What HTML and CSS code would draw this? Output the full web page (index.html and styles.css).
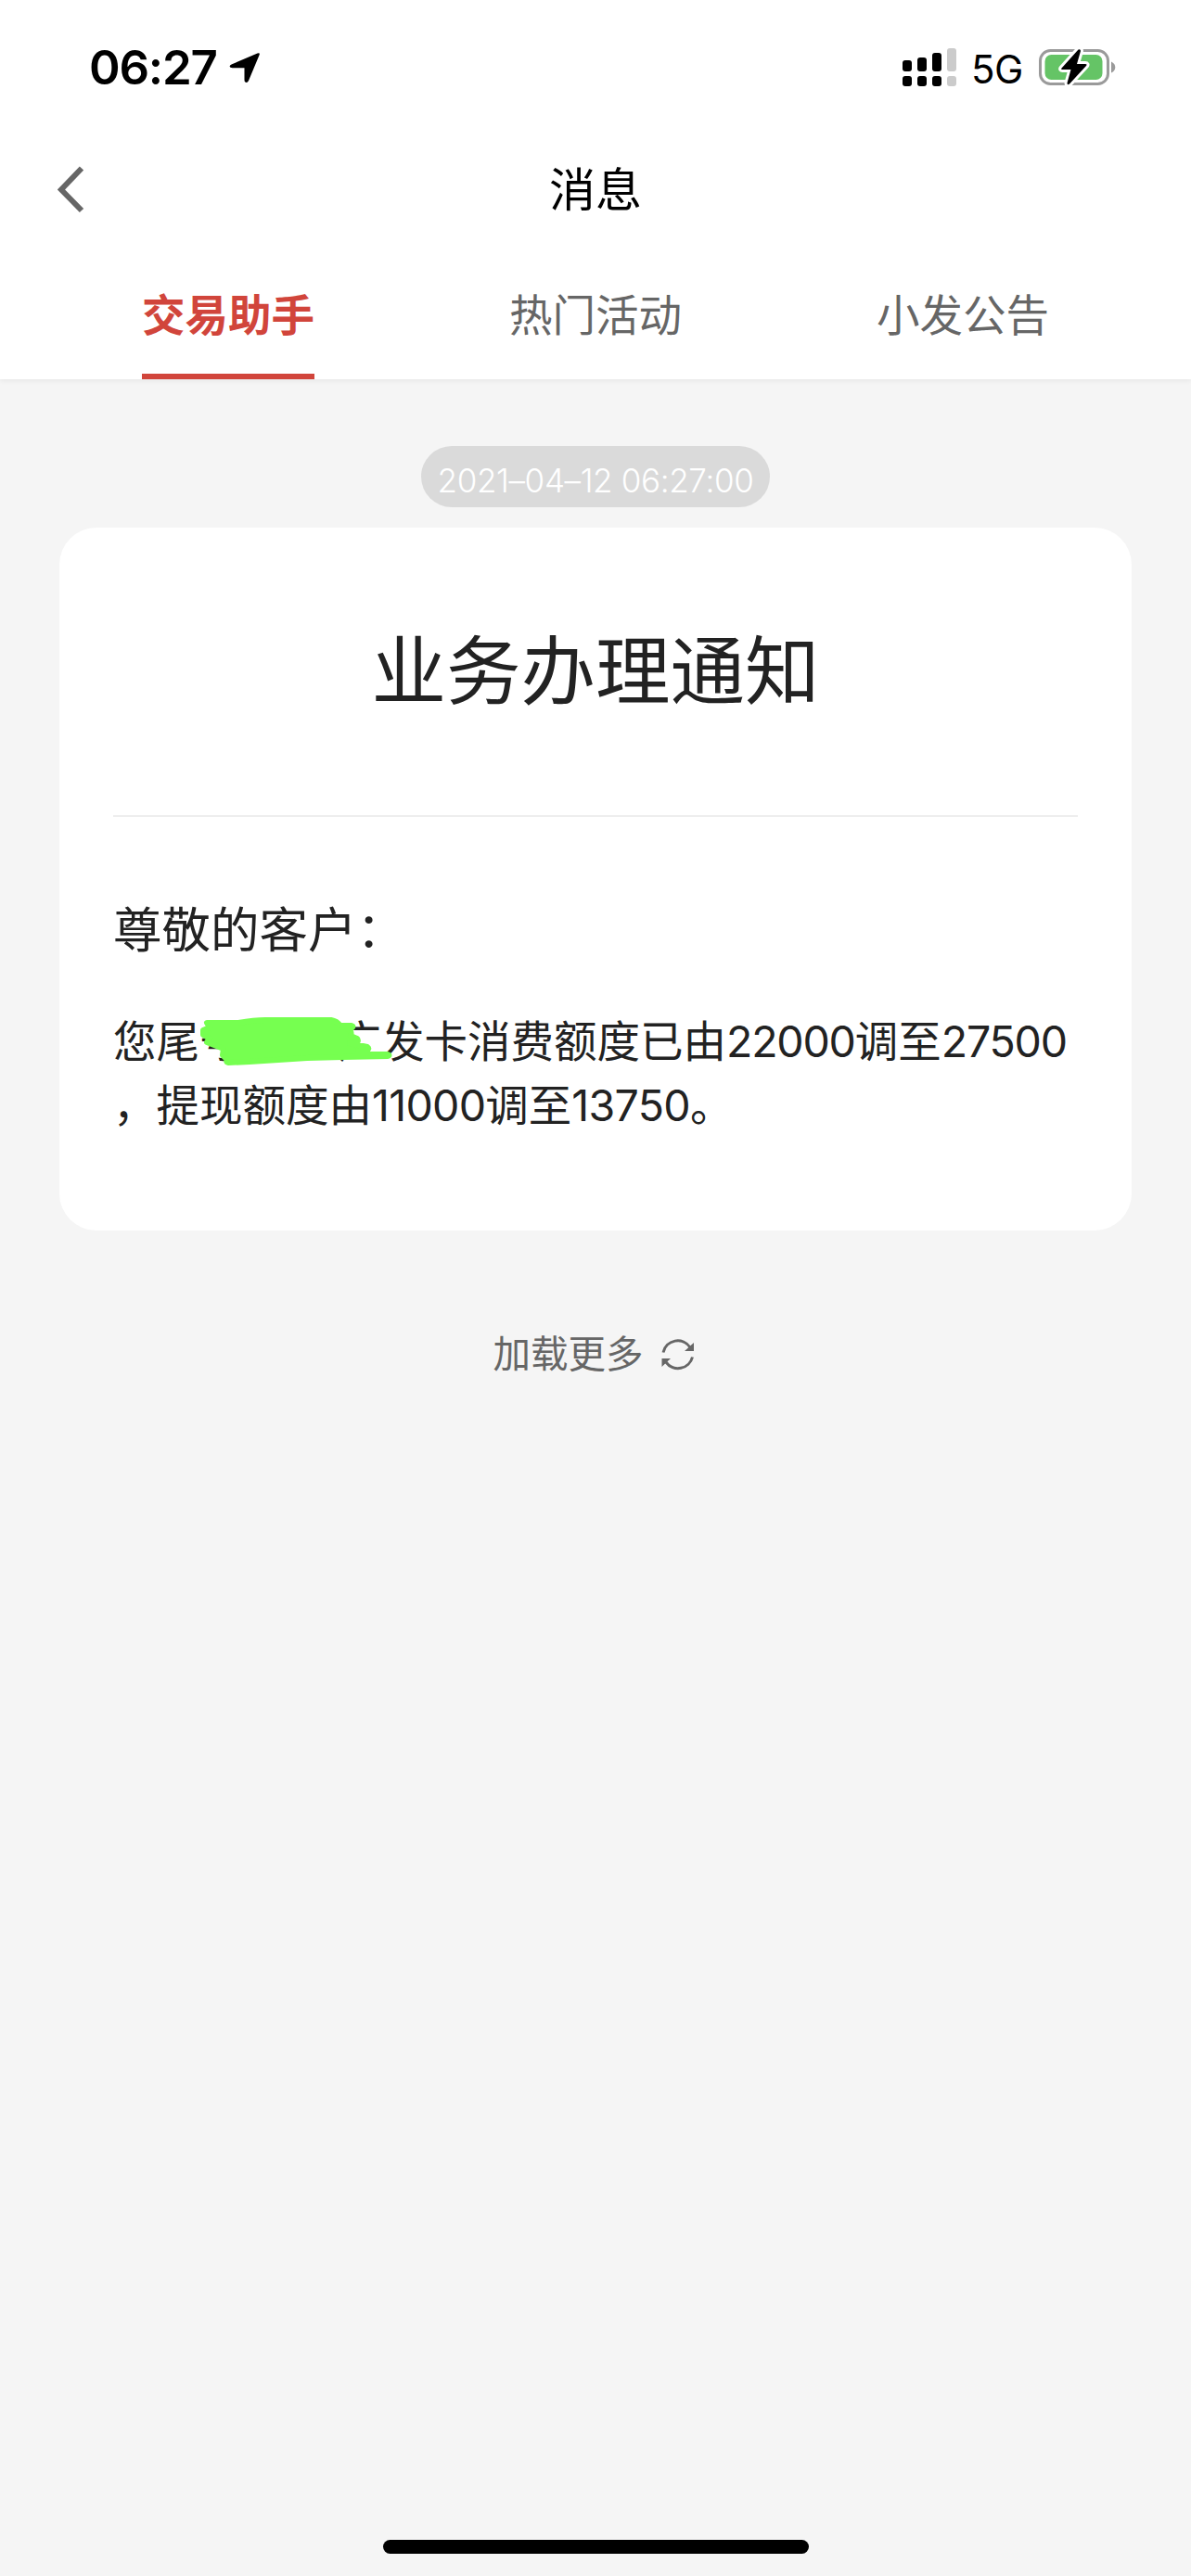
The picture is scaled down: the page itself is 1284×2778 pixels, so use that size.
FILE: index.html
```html
<!DOCTYPE html>
<html lang="zh-CN">
<head>
<meta charset="utf-8">
<title>消息</title>
<link rel="stylesheet" href="styles.css">
</head>
<body>
<div class="screen">
  <header class="header">
    <div class="status">
      <div class="status-left">
        <span class="clock">06:27</span>
        <svg class="location" width="36" height="36" viewBox="0 0 36 36"><path d="M3.5 15.500 31.500 3.500Q34.800 2.400 33.500 5.500L22 33Q20.500 36 18.400 34.600 17.500 34 17.500 32V19.200H4.500Q1.800 19.200 1.600 17.500 1.600 16.300 3.500 15.500Z"/></svg>
      </div>
      <div class="status-right">
        <svg class="signal" width="58" height="42" viewBox="0 0 58 42">
          <rect x="0" y="13" width="10" height="12" rx="3"/><rect x="0" y="30" width="10" height="11" rx="3"/>
          <rect x="16" y="10" width="10" height="15" rx="3"/><rect x="16" y="30" width="10" height="11" rx="3"/>
          <rect x="32" y="5" width="10" height="20" rx="3"/><rect x="32" y="30" width="10" height="11" rx="3"/>
          <g class="off"><rect x="48" y="0" width="10" height="25" rx="3"/><rect x="48" y="30" width="10" height="11" rx="3"/></g>
        </svg>
        <span class="network">5G</span>
        <svg class="battery" width="84" height="42" viewBox="0 0 84 42">
          <rect x="1.500" y="2.500" width="73" height="36" rx="11" fill="none" stroke="#9a9a9a" stroke-width="3"/>
          <path d="M78 14.500Q82.300 16.500 82.300 20.500T78 26.500Z" fill="#9a9a9a"/>
          <rect x="6.500" y="7" width="62" height="27" rx="7" fill="#65c466"/>
          <path d="M42.500 1.500 24.500 21.500Q23.500 23 25.500 23H34.500L30.500 37.500Q30.500 40.500 33 38.500L51 19Q52.500 17 50 17H41L45 3Q45 .5 42.500 1.500Z" fill="#000" stroke="#fff" stroke-width="6" stroke-linejoin="round" paint-order="stroke"/>
        </svg>
      </div>
    </div>
    <div class="navbar">
      <svg class="back" width="32" height="52" viewBox="0 0 32 52"><path d="M28 2.500 6 25.500 28 48" fill="none" stroke="#666" stroke-width="6"/></svg>
      <h1 class="nav-title">消息</h1>
    </div>
    <nav class="tabs">
      <div class="tab"><span class="tab-label active">交易助手</span></div>
      <div class="tab"><span class="tab-label">热门活动</span></div>
      <div class="tab"><span class="tab-label">小发公告</span></div>
    </nav>
  </header>
  <main class="content">
    <time class="stamp">2021–04–12 06:27:00</time>
    <article class="card">
      <h2 class="card-title">业务办理通知</h2>
      <p class="greeting">尊敬的客户：</p>
      <div class="message">
        <p>您尾号<span class="masked"></span>广发卡消费额度已由<span class="num">22000</span>调至<span class="num">27500</span></p>
        <p>，提现额度由<span class="num loose">11000</span>调至<span class="num loose">13750</span>。</p>
        <svg class="scribble" width="212" height="54" viewBox="0 0 212 54"><path d="M9 8H43Q60 5 72 5H143Q149 6 153 11H165Q168 12 165 14H160Q166 17 164 22L171 25Q173 28 170 30H163L182 34Q185 36 181 38H172L173 42H204Q207 43 204 44L155 45 117 46 55 50 32 51Q29 50 31 48L26 43 27 36 9 29 12 25 5 21V16L12 13Z"/></svg>
      </div>
    </article>
    <div class="more">
      <span>加载更多</span>
      <svg class="refresh" width="36" height="36" viewBox="0 0 36 36">
        <path d="M2 15.500A16 16 0 0 1 31 10M33.500 20.500A16 16 0 0 1 5 26" fill="none" stroke="#666" stroke-width="3"/>
        <path d="M35 5V14H25ZM.5 31V22H10Z" fill="#666"/>
      </svg>
    </div>
  </main>
  <div class="home-indicator"></div>
</div>
</body>
</html>
```
FILE: styles.css
```css
* { box-sizing: border-box; margin: 0; padding: 0; }

body {
  background: #f5f5f5;
  color: #222;
  font-family: Inter, "Noto Sans CJK SC", sans-serif;
}

svg { display: block; flex: none; }

.screen {
  display: flex;
  flex-direction: column;
  width: 1284px;
  height: 2778px;
}

.header {
  height: 409px;
  background: #fff;
  box-shadow: 0 2px 5px rgba(0, 0, 0, .06);
}

.status {
  display: flex;
  justify-content: space-between;
  height: 141px;
  padding: 52px 80px 0 96px;
  color: #000;
}

.status-left, .status-right { display: flex; height: 42px; }

.clock {
  width: 150px;
  font-size: 51px;
  font-weight: 600;
  line-height: 42px;
  letter-spacing: -1.2px;
  white-space: nowrap;
}

.location { margin-top: 2px; }
.signal { fill: #000; }
.signal .off { fill: #cbcbcb; }

.network {
  width: 89px;
  padding-left: 16px;
  font-size: 42px;
  font-weight: 400;
  line-height: 45px;
  letter-spacing: -.5px;
}

.navbar {
  display: grid;
  grid-template-columns: 120px 1fr 120px;
  align-items: center;
  height: 127px;
  padding: 0 60px;
}

.nav-title {
  color: #000;
  font-size: 50px;
  font-weight: 400;
  line-height: 72px;
  text-align: center;
}

.tabs {
  display: grid;
  grid-template-columns: repeat(3, 1fr);
  height: 141px;
  padding: 0 48px;
}

.tab { display: flex; justify-content: center; }

.tab-label {
  height: 141px;
  color: #666;
  font-size: 46.500px;
  line-height: 144px;
}

.active {
  border-bottom: 6px solid #d1453b;
  color: #d1453b;
  font-weight: 700;
}

.content {
  display: flex;
  flex: 1;
  flex-direction: column;
  align-items: center;
  padding-top: 72px;
}

.stamp {
  width: 376px;
  height: 66px;
  border-radius: 33px;
  background: #dadada;
  color: #fff;
  font-size: 35px;
  font-weight: 300;
  line-height: 74px;
  letter-spacing: -.35px;
  text-align: center;
  white-space: nowrap;
}

.card {
  width: 1156px;
  height: 758px;
  margin-top: 22px;
  padding: 0 58px;
  border-radius: 40px;
  background: #fff;
}

.card-title {
  height: 312px;
  border-bottom: 2px solid #eee;
  font-size: 80.500px;
  font-weight: 400;
  line-height: 310px;
  text-align: center;
}

.greeting {
  margin-top: 82px;
  font-size: 52.500px;
  line-height: 80px;
}

.message {
  position: relative;
  margin-top: 46px;
  font-size: 46.500px;
  line-height: 69px;
  white-space: nowrap;
}

.num { letter-spacing: -1.2px; }
.loose { letter-spacing: -.7px; }
.masked { display: inline-block; width: 103px; }

.scribble {
  position: absolute;
  top: 6px;
  left: 92px;
  fill: #76ff50;
  stroke: #76ff50;
  stroke-width: 6px;
  stroke-linejoin: round;
}

.more {
  display: flex;
  align-items: center;
  gap: 19px;
  height: 60px;
  margin: 104px 4px 0 0;
  color: #666;
  font-size: 40.500px;
  line-height: 60px;
}

.home-indicator {
  width: 459px;
  height: 15px;
  margin: 0 auto 24px;
  border-radius: 8px;
  background: #000;
}
```
